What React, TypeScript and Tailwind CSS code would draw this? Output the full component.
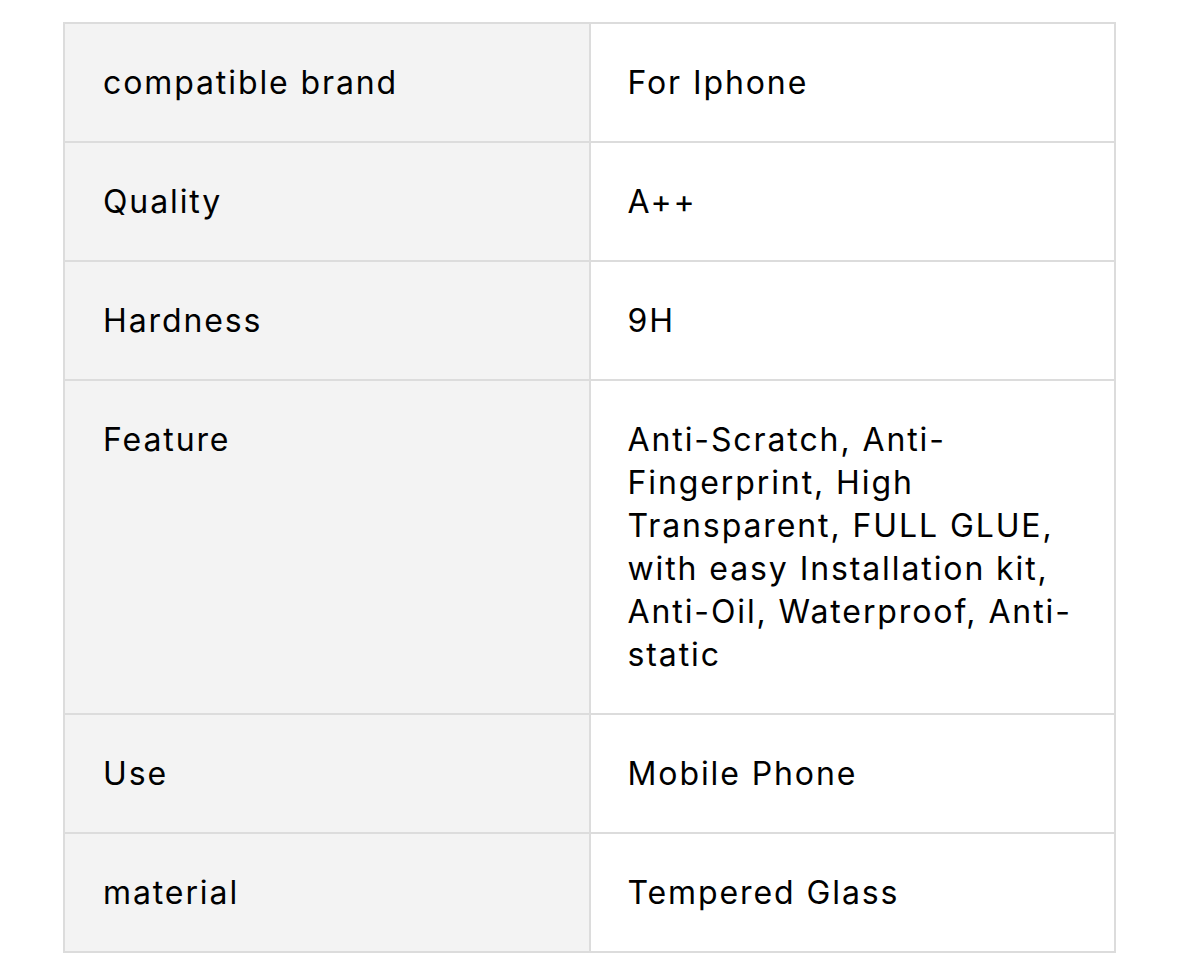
const ROWS: { label: string; value: React.ReactNode }[] = [
  { label: "compatible brand", value: "For Iphone" },
  { label: "Quality", value: "A++" },
  { label: "Hardness", value: "9H" },
  {
    label: "Feature",
    value: (
      <>
        Anti-Scratch, Anti-
        <br />
        Fingerprint, High
        <br />
        Transparent, FULL GLUE,
        <br />
        with easy Installation kit,
        <br />
        Anti-Oil, Waterproof, Anti-
        <br />
        static
      </>
    ),
  },
  { label: "Use", value: "Mobile Phone" },
  { label: "material", value: "Tempered Glass" },
];

export default function App() {
  return (
    <div className="min-h-[970px] w-full bg-white pl-[63px] pr-[63px] pt-[22px] font-['Inter',sans-serif] text-[32px] leading-[43px] tracking-[1.9px] text-black antialiased">
      <table className="w-[1053px] table-fixed border-collapse">
        <tbody>
          {ROWS.map((row) => (
            <tr key={row.label}>
              <td className="w-1/2 border-2 border-[#dcdcdc] bg-[#f3f3f3] pl-[38px] pr-[30px] py-[37px] align-top">
                {row.label}
              </td>
              <td className="w-1/2 border-2 border-[#dcdcdc] bg-white pl-[37px] pr-[20px] py-[37px] align-top whitespace-nowrap">
                {row.value}
              </td>
            </tr>
          ))}
        </tbody>
      </table>
    </div>
  );
}
